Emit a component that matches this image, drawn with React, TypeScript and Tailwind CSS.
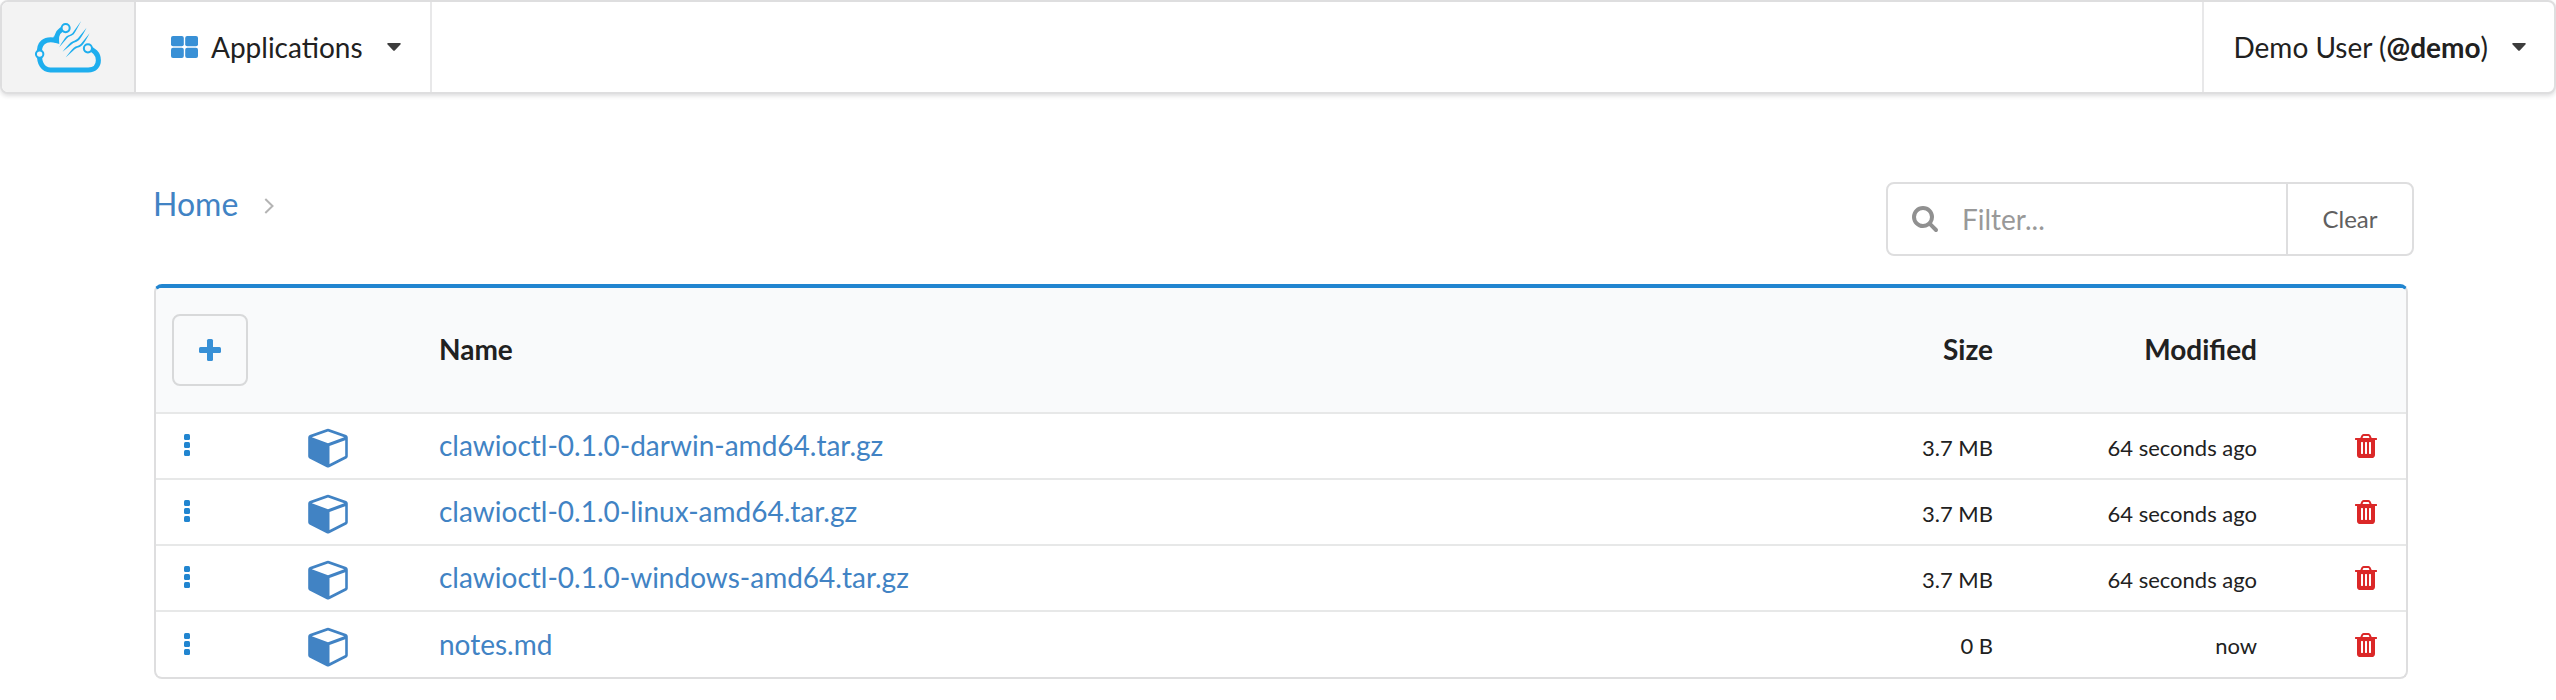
import React from "react";

type FileRow = { name: string; size: string; modified: string };

const files: FileRow[] = [
  { name: "clawioctl-0.1.0-darwin-amd64.tar.gz", size: "3.7 MB", modified: "64 seconds ago" },
  { name: "clawioctl-0.1.0-linux-amd64.tar.gz", size: "3.7 MB", modified: "64 seconds ago" },
  { name: "clawioctl-0.1.0-windows-amd64.tar.gz", size: "3.7 MB", modified: "64 seconds ago" },
  { name: "notes.md", size: "0 B", modified: "now" },
];

function CloudLogo() {
  return (
    <svg viewBox="32 30 200 160" className="h-[54px] w-[68px]" fill="none" stroke="#1eaeee" aria-hidden="true">
      <path d="M48 131C44 100 62 82 98 91C97 74 106 58 124 54" strokeWidth="15" />
      <path d="M48 131C46 158 58 178 80 178H192C212 178 222 164 222 149C222 130 208 117 191 114" strokeWidth="15" />
      <path d="M85 94L99 98L105 84L90 78Z" fill="#1eaeee" stroke="none" />
      <g fill="#f3f3f3" strokeWidth="6">
        <circle cx="48" cy="131" r="11" />
        <circle cx="125" cy="54" r="12" />
        <circle cx="191" cy="114" r="12" />
      </g>
      <g fill="#1eaeee" stroke="none">
        <path d="M171 33C163 48 156 62 149 72C141 79 134 77 129 84L106 111C113 98 121 86 127 79C134 73 139 75 145 69Z" />
        <path d="M187 53C180 67 172 80 165 89C156 97 149 95 143 102L116 124C124 113 134 103 140 97C147 91 154 92 161 85Z" />
        <path d="M196 69C189 83 181 96 174 105C166 113 158 111 152 117L125 141C133 130 143 118 149 112C156 106 163 108 170 101Z" />
      </g>
    </svg>
  );
}

function Caret() {
  return (
    <svg viewBox="0 0 14 8" className="h-2 w-[14px] shrink-0" fill="#3d3d3d" aria-hidden="true">
      <path d="M1 0H13Q14.300 .5 13.400 1.500L7.800 7.400Q7 8.200 6.200 7.400L.6 1.500Q-.3 .5 1 0Z" />
    </svg>
  );
}

function GridIcon() {
  return (
    <svg viewBox="0 0 27 22" className="h-[22px] w-[27px] shrink-0" fill="#3890d6" aria-hidden="true">
      <rect width="12.800" height="10.300" rx="2" />
      <rect x="14.200" width="12.800" height="10.300" rx="2" />
      <rect y="11.700" width="12.800" height="10.300" rx="2" />
      <rect x="14.200" y="11.700" width="12.800" height="10.300" rx="2" />
    </svg>
  );
}

function SearchIcon() {
  return (
    <svg viewBox="64 128 1664 1664" className="h-[26px] w-[26px] shrink-0" fill="#909090" aria-hidden="true">
      <path d="M1216 832q0-185-131.500-316.500t-316.500-131.500-316.500 131.500-131.500 316.500 131.500 316.500 316.500 131.500 316.500-131.500 131.500-316.500zm512 832q0 52-38 90t-90 38q-54 0-90-38l-343-342q-179 124-399 124-143 0-273.500-55.500t-225-150-150-225-55.500-273.500 55.500-273.500 150-225 225-150 273.500-55.500 273.500 55.500 225 150 150 225 55.500 273.500q0 220-124 399l343 343q37 37 37 90z" />
    </svg>
  );
}

function PlusIcon() {
  return (
    <svg viewBox="0 0 22 22" className="h-[22px] w-[22px]" fill="#3890d6" aria-hidden="true">
      <rect x="8" width="6" height="22" rx="1.500" />
      <rect y="8" width="22" height="6" rx="1.500" />
    </svg>
  );
}

function DotsIcon() {
  return (
    <svg viewBox="0 0 6 22" className="h-[22px] w-[6px]" fill="#2185d0" aria-hidden="true">
      <rect width="6" height="6" rx="1.500" />
      <rect y="8" width="6" height="6" rx="1.500" />
      <rect y="16" width="6" height="6" rx="1.500" />
    </svg>
  );
}

function CubeIcon() {
  return (
    <svg viewBox="0 0 40 40" className="h-10 w-10" fill="#4183c4" aria-hidden="true">
      <path
        fillRule="evenodd"
        d="M18.900 .9Q20 .4 21.100 .9L38.200 7Q39.800 7.700 39.800 9.400V28.200Q39.800 29.700 38.500 30.400L21.300 39.200Q20 39.800 18.700 39.200L1.500 30.400Q.2 29.700 .2 28.200V9.400Q.2 7.700 1.800 7ZM20 3.500L3.800 9.300L20 15.200L36.200 9.300ZM21.500 17.900V36L37.200 27.900V12.200Z"
      />
    </svg>
  );
}

function TrashIcon() {
  return (
    <svg viewBox="192 128 1408 1536" className="h-6 w-[22px]" fill="#db2828" aria-hidden="true">
      <path d="M704 1376v-704q0-14-9-23t-23-9h-64q-14 0-23 9t-9 23v704q0 14 9 23t23 9h64q14 0 23-9t9-23zm256 0v-704q0-14-9-23t-23-9h-64q-14 0-23 9t-9 23v704q0 14 9 23t23 9h64q14 0 23-9t9-23zm256 0v-704q0-14-9-23t-23-9h-64q-14 0-23 9t-9 23v704q0 14 9 23t23 9h64q14 0 23-9t9-23zm-544-992h448l-48-117q-7-9-17-11h-317q-10 2-17 11zm928 32v64q0 14-9 23t-23 9h-96v948q0 83-47 143.500t-113 60.500h-832q-66 0-113-58.500t-47-141.500v-952h-96q-14 0-23-9t-9-23v-64q0-14 9-23t23-9h309l70-167q15-37 54-63t79-26h320q40 0 79 26t54 63l70 167h309q14 0 23 9t9 23z" />
    </svg>
  );
}

export default function App() {
  return (
    <div className="bg-white font-[Lato,sans-serif] text-[28px] leading-[36px] text-[#212121]">
      <header className="flex h-[94px] items-stretch rounded-lg border-2 border-[#dededf] bg-white shadow-[0_2px_4px_rgba(34,36,38,0.15)]">
        <a href="#home" aria-label="Home" className="flex w-[134px] items-center justify-center rounded-l-md border-r-2 border-[#dededf] bg-[#f3f3f3]">
          <CloudLogo />
        </a>
        <button type="button" className="flex w-[296px] items-center border-r-2 border-[#e8e8e9] pl-[35px]">
          <GridIcon />
          <span className="ml-[13px] mr-[24px]">Applications</span>
          <Caret />
        </button>
        <button type="button" className="ml-auto flex items-center border-l-2 border-[#e8e8e9] pl-[29px] pr-[28px]">
          <span className="mr-[24px]">
            Demo User (<b>@demo</b>)
          </span>
          <Caret />
        </button>
      </header>

      <main className="pt-[88px]">
        <div className="flex items-start justify-between pl-[153px] pr-[142px]">
          <nav aria-label="Breadcrumb" className="flex items-center pt-[4px] text-[32px] leading-[36px]">
            <a href="#home" className="text-[#4183c4]">Home</a>
            <svg viewBox="0 0 10 16" className="ml-[26px] mt-[4px] h-4 w-[10px]" fill="none" stroke="#b4b4b4" strokeWidth="2" aria-hidden="true">
              <path d="M1.300 1L8.500 8L1.300 15" />
            </svg>
          </nav>
          <form className="flex h-[74px] w-[528px] rounded-lg border-2 border-[#dededf]">
            <label className="flex min-w-0 flex-1 items-center pl-[24px]">
              <SearchIcon />
              <input
                type="text"
                aria-label="Filter"
                placeholder="Filter..."
                className="ml-[24px] w-full min-w-0 bg-transparent outline-none placeholder:text-[#999999]"
              />
            </label>
            <button type="button" className="w-[126px] border-l-2 border-[#dededf] text-[24px] text-[#606060]">
              Clear
            </button>
          </form>
        </div>

        <div className="ml-[154px] mr-[148px] mt-[28px] overflow-hidden rounded-lg border-2 border-t-4 border-[#dededf] border-t-[#2185d0]">
          <table className="w-full table-fixed border-collapse">
            <colgroup>
              <col className="w-[134px]" />
              <col className="w-[132px]" />
              <col />
              <col className="w-[250px]" />
              <col className="w-[264px]" />
              <col className="w-[132px]" />
            </colgroup>
            <thead>
              <tr className="h-[125px] bg-[#f9fafb]">
                <th className="pl-[16px] text-left">
                  <button type="button" aria-label="Add" className="flex h-[72px] w-[76px] items-center justify-center rounded-lg border-2 border-[#d8d9da]">
                    <PlusIcon />
                  </button>
                </th>
                <th aria-label="Type" />
                <th className="pb-[2px] pl-[17px] text-left font-bold">Name</th>
                <th className="pb-[2px] pr-[17px] text-right font-bold">Size</th>
                <th className="pb-[2px] pr-[17px] text-right font-bold">Modified</th>
                <th aria-label="Actions" />
              </tr>
            </thead>
            <tbody>
              {files.map((file) => (
                <tr key={file.name} className="h-[66px] border-t-2 border-[#e7e8e8]">
                  <td className="pb-[2px] pl-[28px]">
                    <button type="button" aria-label="Options" className="block">
                      <DotsIcon />
                    </button>
                  </td>
                  <td className="pl-[18px] pt-[4px]">
                    <CubeIcon />
                  </td>
                  <td className="pb-[2px] pl-[17px]">
                    <a href="#file" className="text-[#4183c4]">{file.name}</a>
                  </td>
                  <td className="pr-[17px] pt-[3px] text-right text-[22px]">{file.size}</td>
                  <td className="pr-[17px] pt-[3px] text-right text-[22px]">{file.modified}</td>
                  <td className="pr-[29px]">
                    <button type="button" aria-label="Delete" className="ml-auto block">
                      <TrashIcon />
                    </button>
                  </td>
                </tr>
              ))}
            </tbody>
          </table>
        </div>
      </main>
    </div>
  );
}
